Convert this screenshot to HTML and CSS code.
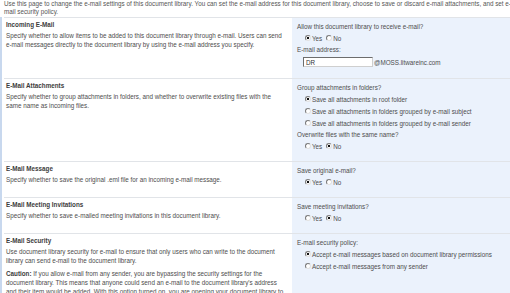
FILE: index.html
```html
<!DOCTYPE html>
<html lang="en">
<head>
  <meta charset="UTF-8" />
  <title>Document Library Incoming E-Mail Settings</title>
  <link rel="stylesheet" href="styles.css">
</head>
<body>
  <div class="page">
    <p class="intro">Use this page to change the e-mail settings of this document library. You can set the e-mail address for this document library, choose to save or discard e-mail attachments, and set e-mail security policy.</p>

    <div class="sections">
      <section class="row">
        <div class="info">
          <h3>Incoming E-Mail</h3>
          <p>Specify whether to allow items to be added to this document library through e-mail. Users can send e-mail messages directly to the document library by using the e-mail address you specify.</p>
        </div>
        <div class="ctrl">
          <div class="label">Allow this document library to receive e-mail?</div>
          <div class="opts">
            <label class="opt"><input type="radio" name="allow" checked />Yes</label>
            <label class="opt"><input type="radio" name="allow" />No</label>
          </div>
          <div class="label">E-mail address:</div>
          <div class="addr">
            <input type="text" class="field" value="DR" />
            <span>@MOSS.litwareinc.com</span>
          </div>
        </div>
      </section>

      <section class="row">
        <div class="info">
          <h3>E-Mail Attachments</h3>
          <p>Specify whether to group attachments in folders, and whether to overwrite existing files with the same name as incoming files.</p>
        </div>
        <div class="ctrl">
          <div class="label">Group attachments in folders?</div>
          <div class="opts stack">
            <label class="opt"><input type="radio" name="group" checked />Save all attachments in root folder</label>
            <label class="opt"><input type="radio" name="group" />Save all attachments in folders grouped by e-mail subject</label>
            <label class="opt"><input type="radio" name="group" />Save all attachments in folders grouped by e-mail sender</label>
          </div>
          <div class="label">Overwrite files with the same name?</div>
          <div class="opts">
            <label class="opt"><input type="radio" name="overwrite" />Yes</label>
            <label class="opt"><input type="radio" name="overwrite" checked />No</label>
          </div>
        </div>
      </section>

      <section class="row">
        <div class="info">
          <h3>E-Mail Message</h3>
          <p>Specify whether to save the original .eml file for an incoming e-mail message.</p>
        </div>
        <div class="ctrl">
          <div class="label">Save original e-mail?</div>
          <div class="opts">
            <label class="opt"><input type="radio" name="orig" checked />Yes</label>
            <label class="opt"><input type="radio" name="orig" />No</label>
          </div>
        </div>
      </section>

      <section class="row">
        <div class="info">
          <h3>E-Mail Meeting Invitations</h3>
          <p>Specify whether to save e-mailed meeting invitations in this document library.</p>
        </div>
        <div class="ctrl">
          <div class="label">Save meeting invitations?</div>
          <div class="opts">
            <label class="opt"><input type="radio" name="meet" />Yes</label>
            <label class="opt"><input type="radio" name="meet" checked />No</label>
          </div>
        </div>
      </section>

      <section class="row">
        <div class="info">
          <h3>E-Mail Security</h3>
          <p>Use document library security for e-mail to ensure that only users who can write to the document library can send e-mail to the document library.</p>
          <p class="caution"><b>Caution:</b> If you allow e-mail from any sender, you are bypassing the security settings for the document library. This means that anyone could send an e-mail to the document library's address and their item would be added. With this option turned on, you are opening your document library to spam or other unwanted e-mail.</p>
        </div>
        <div class="ctrl">
          <div class="label">E-mail security policy:</div>
          <div class="opts stack">
            <label class="opt"><input type="radio" name="policy" checked />Accept e-mail messages based on document library permissions</label>
            <label class="opt"><input type="radio" name="policy" />Accept e-mail messages from any sender</label>
          </div>
        </div>
      </section>
    </div>
  </div>
</body>
</html>
```

FILE: styles.css
```css
body {
  margin: 0;
  font-family: 'Liberation Sans', Arial, sans-serif;
  font-size: 6.3px;
  color: #4d4d4d;
  background: #ffffff;
  overflow: hidden;
}
.page {
  width: 580px;
}
.intro {
  width: 514px;
  margin: 0;
  padding: 0 0 2px 4px;
  line-height: 7.5px;
  color: #555;
}
.sections {
  border-left: 2px solid #c8d8ee;
  padding-left: 2px;
}
.row {
  display: flex;
  border-top: 1px solid #e1e4e8;
}
.info {
  flex: none;
  width: 280px;
  padding: 2px 6px 8px 2px;
}
.info h3 {
  margin: 0;
  font-size: 6.3px;
  line-height: 9px;
  color: #3c3c3c;
}
.info p {
  margin: 2px 0 0;
  line-height: 9px;
}
.info .caution {
  margin-top: 4px;
}
.caution b {
  color: #3c3c3c;
}
.ctrl {
  flex: 1;
  background: #ebf2fc;
  padding: 3px 5px 9px;
}
.label {
  line-height: 11px;
}
.opts {
  display: flex;
  gap: 4px;
  padding-left: 8px;
}
.opts.stack {
  flex-direction: column;
  gap: 0;
}
.opt {
  display: flex;
  align-items: center;
  height: 12px;
}
.opt input {
  appearance: none;
  width: 6px;
  height: 6px;
  margin: 0 1px 0 0;
  border: 1px solid;
  border-color: #7a7a7a #e2e2e2 #e2e2e2 #7a7a7a;
  border-radius: 50%;
  background: #fff;
  box-sizing: border-box;
}
.opt input:checked {
  background: radial-gradient(circle, #111 0, #111 1px, #fff 1.6px);
}
.addr {
  display: flex;
  align-items: center;
  margin: 2px 0;
  padding-left: 6px;
}
.field {
  width: 70px;
  height: 10px;
  margin: 0 1px 0 0;
  padding: 0 2px;
  border: 1px solid;
  border-color: #6d6d6d #cfcfcf #cfcfcf #6d6d6d;
  box-sizing: border-box;
  font-family: inherit;
  font-size: 6.3px;
  color: #333;
  background: #fff;
}
```
